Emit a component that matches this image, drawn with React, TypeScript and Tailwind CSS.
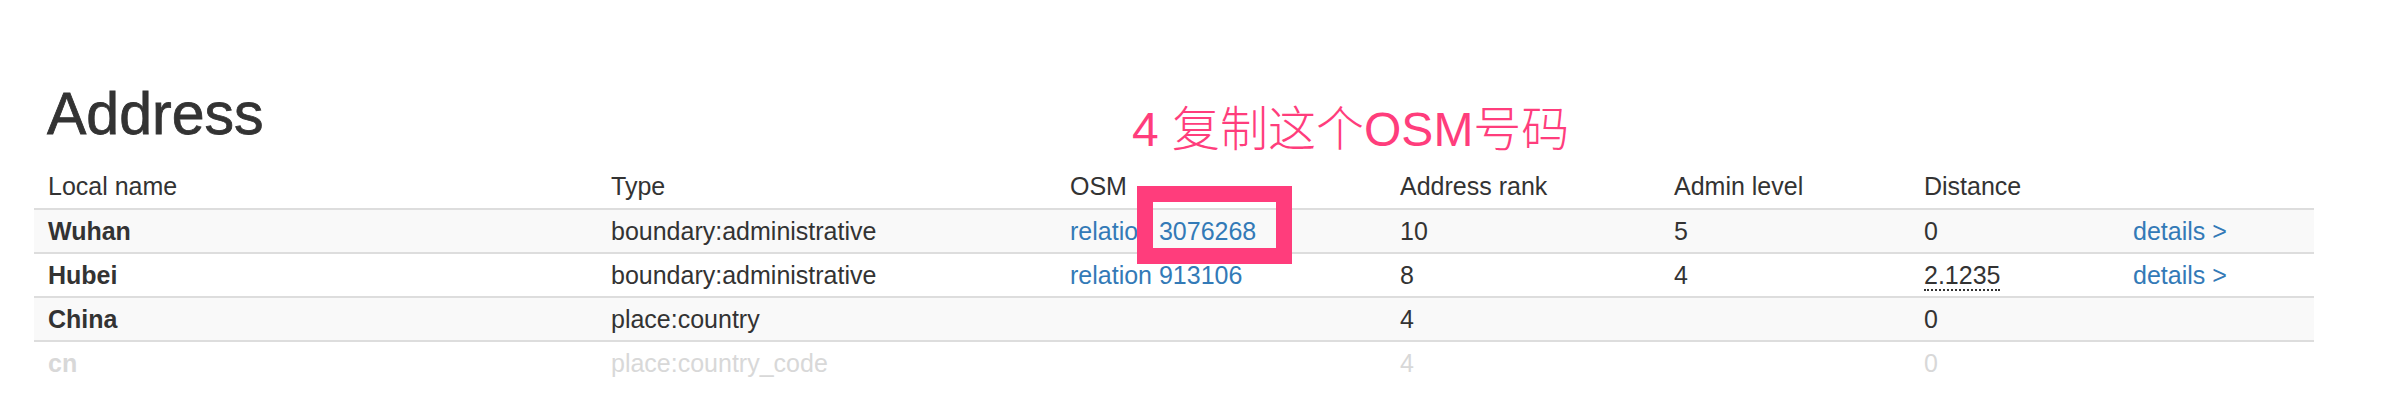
import React from "react";

type Row = {
  name: string;
  type: string;
  osm?: string;
  rank: string;
  level?: string;
  distance: string;
  abbr?: boolean;
  details?: boolean;
  muted?: boolean;
};

const rows: Row[] = [
  { name: "Wuhan", type: "boundary:administrative", osm: "relation 3076268", rank: "10", level: "5", distance: "0", details: true },
  { name: "Hubei", type: "boundary:administrative", osm: "relation 913106", rank: "8", level: "4", distance: "2.1235", abbr: true, details: true },
  { name: "China", type: "place:country", rank: "4", distance: "0" },
  { name: "cn", type: "place:country_code", rank: "4", distance: "0", muted: true },
];

const grid =
  "grid grid-cols-[563px_459px_330px_274px_250px_209px_195px] items-center";

export default function App() {
  return (
    <div
      className="relative w-[2382px] h-[404px] bg-white overflow-hidden text-[#333]"
      style={{ fontFamily: '"Liberation Sans", Arial, sans-serif' }}
    >
      <div className="pt-[85px] pl-[34px]">
        <h2 className="pl-[13px] text-[59px] leading-[59px] font-medium [-webkit-text-stroke:0.8px_#333]">
          Address
        </h2>
        <div className="mt-[20px] w-[2280px] text-[25px]">
          <div className={`${grid} h-[44px]`}>
            {["Local name", "Type", "OSM", "Address rank", "Admin level", "Distance", ""].map((h, i) => (
              <div key={i} className="px-[14px] leading-[44px] whitespace-nowrap">
                {h}
              </div>
            ))}
          </div>
          {rows.map((r, idx) => (
            <div
              key={r.name}
              className={`${grid} h-[44px] border-t-2 border-[#dddddd] ${
                idx % 2 === 0 ? "bg-[#f9f9f9]" : "bg-white"
              } ${r.muted ? "text-[#d8d8d8]" : ""}`}
            >
              <div className="px-[14px] leading-[42px] font-bold whitespace-nowrap">{r.name}</div>
              <div className="px-[14px] leading-[42px] whitespace-nowrap">{r.type}</div>
              <div className="px-[14px] leading-[42px] whitespace-nowrap text-[#337ab7]">{r.osm ?? ""}</div>
              <div className="px-[14px] leading-[42px] whitespace-nowrap">{r.rank}</div>
              <div className="px-[14px] leading-[42px] whitespace-nowrap">{r.level ?? ""}</div>
              <div className="px-[14px] leading-[42px] whitespace-nowrap">
                {r.abbr ? (
                  <abbr
                    title="2.1235"
                    className="no-underline border-b-2 border-dotted border-[#333]"
                  >
                    {r.distance}
                  </abbr>
                ) : (
                  r.distance
                )}
              </div>
              <div className="px-[14px] leading-[42px] whitespace-nowrap text-[#337ab7]">
                {r.details ? "details >" : ""}
              </div>
            </div>
          ))}
        </div>
      </div>

      {/* annotation overlay */}
      <div
        className="absolute left-[1132px] top-[106px] text-[48px] leading-[48px] font-light text-[#ff3d7c] whitespace-nowrap"
        style={{ fontFamily: '"Liberation Sans", "Noto Sans CJK SC", sans-serif' }}
      >
        4 复制这个OSM号码
      </div>
      <div className="absolute left-[1137px] top-[186px] w-[155px] h-[78px] border-[16px] border-[#ff3d7c]" />
    </div>
  );
}
